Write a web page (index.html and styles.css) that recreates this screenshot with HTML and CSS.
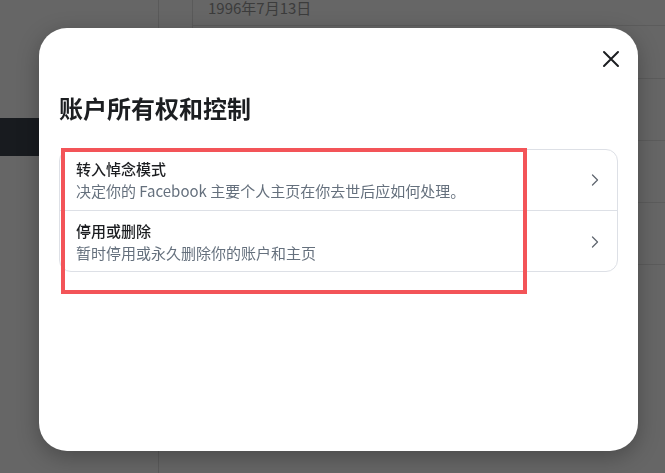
FILE: index.html
```html
<!DOCTYPE html>
<html lang="zh-CN">
<head>
<meta charset="utf-8">
<title>账户所有权和控制</title>
<link rel="stylesheet" href="styles.css">
</head>
<body>
<div class="page">
  <aside class="sidebar">
    <div class="nav-item active"></div>
  </aside>
  <main class="main">
    <section class="bg-card">
      <div class="bg-row first"><span class="bg-date">1996年7月13日</span></div>
      <div class="bg-row short"></div>
      <div class="bg-row"></div>
      <div class="bg-row"></div>
      <div class="bg-row"></div>
    </section>
  </main>
</div>

<div class="modal" role="dialog" aria-labelledby="modal-title">
  <button class="close" aria-label="关闭">
    <svg width="18" height="18" viewBox="0 0 18 18"><path d="M2 2 L16 16 M16 2 L2 16" stroke="#1c1e21" stroke-width="2" stroke-linecap="round" fill="none"/></svg>
  </button>
  <h1 id="modal-title" class="modal-title">账户所有权和控制</h1>
  <div class="list">
    <div class="list-row">
      <div class="row-text">
        <div class="row-title">转入悼念模式</div>
        <div class="row-sub">决定你的 Facebook 主要个人主页在你去世后应如何处理。</div>
      </div>
      <svg class="chev" width="12" height="12" viewBox="0 0 12 12"><path d="M3.5 1 L8.5 6 L3.5 11" stroke="#606770" stroke-width="1.3" fill="none" stroke-linecap="round" stroke-linejoin="round"/></svg>
    </div>
    <div class="list-row">
      <div class="row-text">
        <div class="row-title">停用或删除</div>
        <div class="row-sub">暂时停用或永久删除你的账户和主页</div>
      </div>
      <svg class="chev" width="12" height="12" viewBox="0 0 12 12"><path d="M3.5 1 L8.5 6 L3.5 11" stroke="#606770" stroke-width="1.3" fill="none" stroke-linecap="round" stroke-linejoin="round"/></svg>
    </div>
  </div>
</div>
<div class="highlight"></div>
</body>
</html>
```

FILE: styles.css
```css
* { box-sizing: border-box; }
html, body { margin: 0; padding: 0; }
body {
  width: 665px;
  height: 473px;
  overflow: hidden;
  background: #666666;
  font-family: "Noto Sans CJK SC", "Noto Sans", sans-serif;
}
.page {
  display: flex;
  height: 473px;
}
.sidebar {
  width: 159px;
  border-right: 1px solid #5a5a5a;
  padding-top: 118px;
}
.nav-item.active {
  height: 38px;
  background: #181b1f;
}
.main {
  flex: 1;
  padding-left: 33px;
}
.bg-card {
  border-left: 1px solid #5a5a5a;
}
.bg-row {
  height: 62px;
  border-bottom: 1px solid #5c5c5c;
}
.bg-row.first {
  height: 26px;
  padding-left: 15px;
}
.bg-row.short {
  height: 53px;
}
.bg-date {
  display: block;
  font-size: 15px;
  line-height: 16px;
  color: #3c3c3c;
}

.modal {
  position: fixed;
  left: 39px;
  top: 28px;
  width: 599px;
  height: 423px;
  background: #fff;
  border-radius: 28px;
  box-shadow: 0 6px 22px rgba(0,0,0,0.28);
  padding: 65px 20px 0 20px;
}
.close {
  position: absolute;
  top: 15px;
  right: 11px;
  width: 32px;
  height: 32px;
  border: 0;
  background: transparent;
  padding: 0;
  display: flex;
  align-items: center;
  justify-content: center;
}
.modal-title {
  margin: 0;
  font-size: 24px;
  line-height: 30px;
  font-weight: 700;
  color: #1c1e21;
}
.list {
  margin-top: 26px;
  border: 1px solid #dde0e6;
  border-radius: 12px;
}
.list-row {
  display: flex;
  align-items: center;
  height: 60px;
  padding: 0 16px;
}
.list-row + .list-row {
  border-top: 1px solid #dde0e6;
  height: 61px;
  padding-top: 1px;
}
.row-text { flex: 1; }
.row-title {
  font-size: 15px;
  line-height: 22px;
  font-weight: 500;
  color: #1c1e21;
}
.row-sub {
  font-size: 15px;
  line-height: 22px;
  color: #65707d;
}
.chev { flex: none; }

.highlight {
  position: fixed;
  left: 61px;
  top: 148px;
  width: 466px;
  height: 146px;
  border: 4px solid #f35458;
}
```
